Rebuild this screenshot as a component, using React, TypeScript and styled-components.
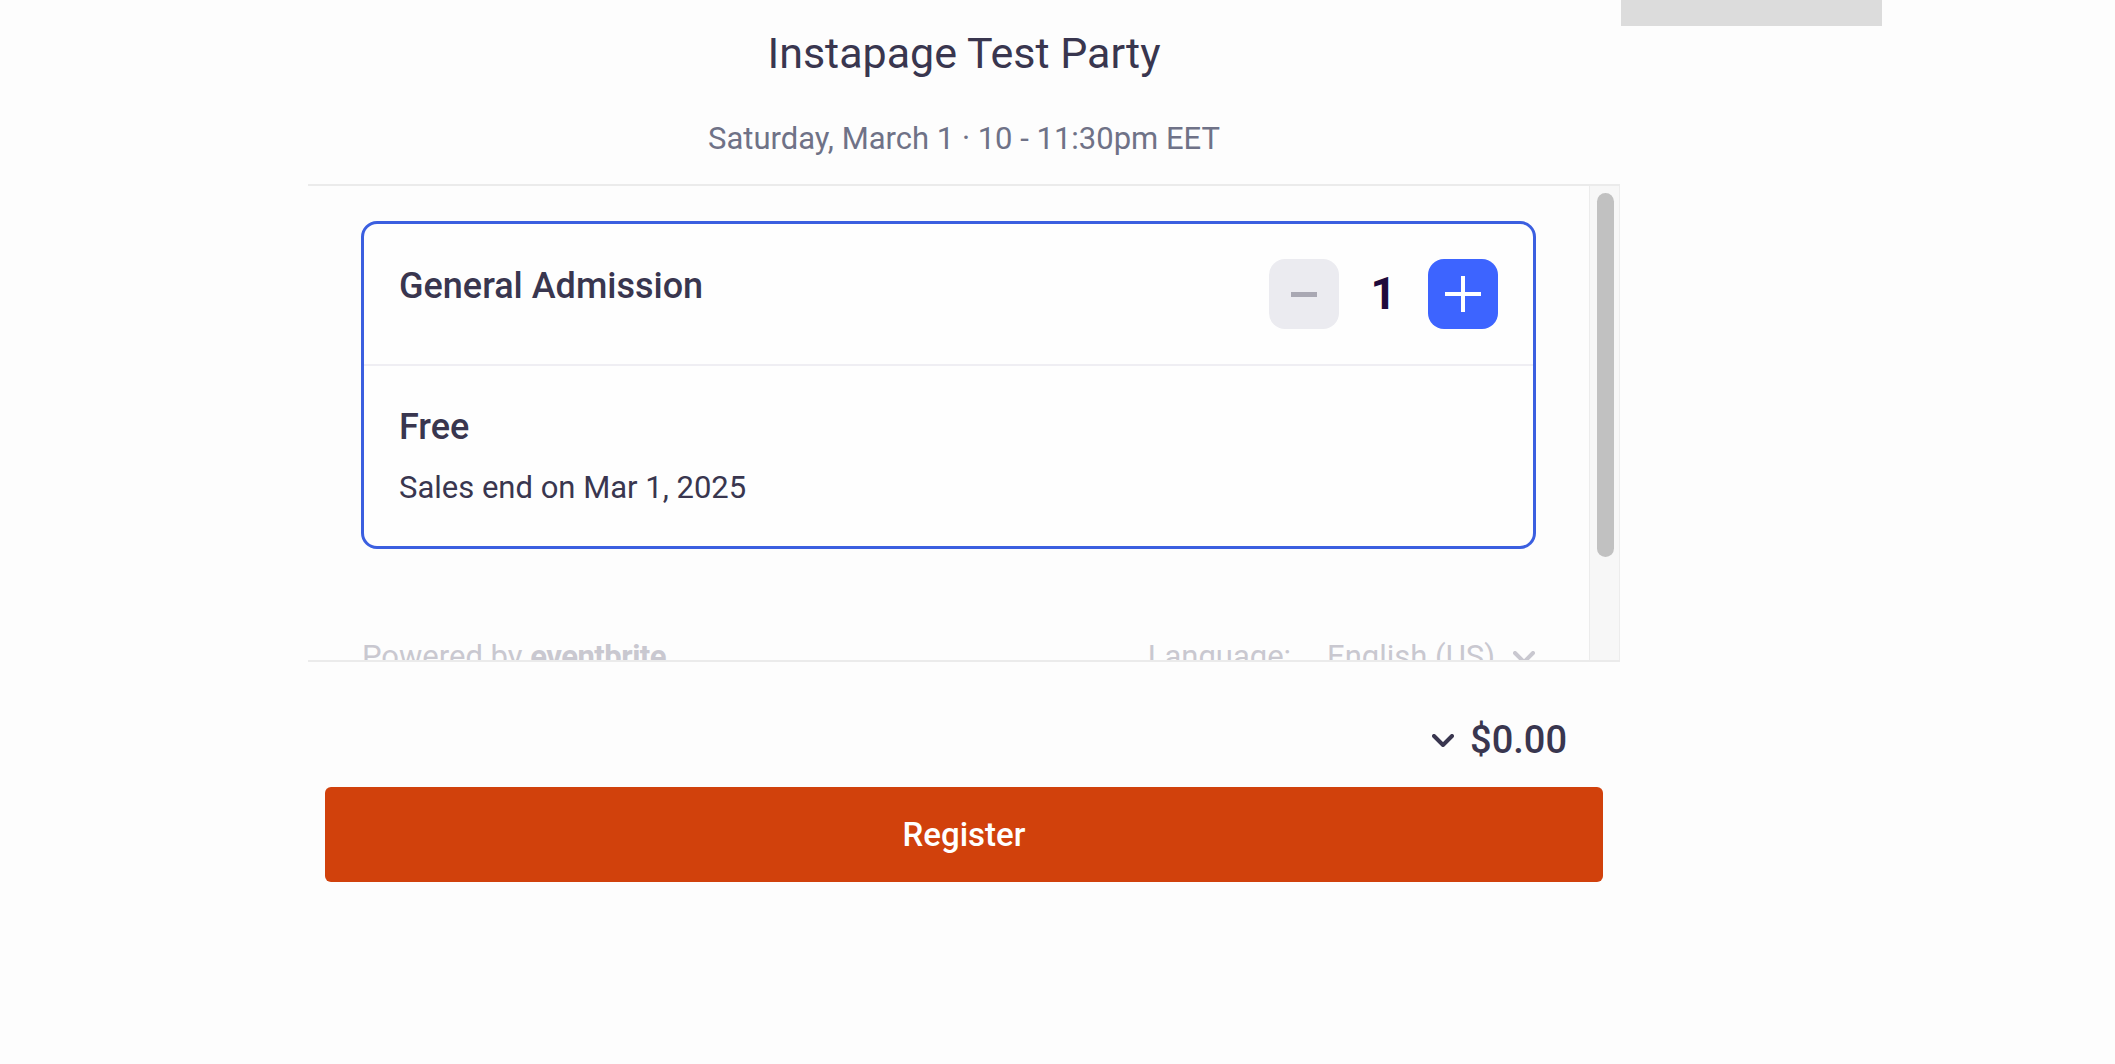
import React from "react";
import styled, { createGlobalStyle } from "styled-components";

const GlobalStyle = createGlobalStyle`
  html, body { margin: 0; padding: 0; background: #fdfdfd; }
  body { font-family: Roboto, "Liberation Sans", Arial, sans-serif; color: #39364f; }
  * { box-sizing: border-box; }
`;

const Page = styled.div`
  display: flex;
  align-items: flex-start;
  padding-left: 308px;
  min-height: 1064px;
`;

const Column = styled.main`
  width: 1312px;
  display: flex;
  flex-direction: column;
`;

const Aside = styled.aside`
  width: 261px;
  height: 26px;
  margin-left: 1px;
  background: #dcdcdc;
`;

const Header = styled.header`
  display: flex;
  flex-direction: column;
  align-items: center;
  padding: 28px 0 27px;
`;

const Title = styled.h1`
  margin: 0;
  font-size: 43px;
  line-height: 50px;
  font-weight: 400;
  color: #39364f;
`;

const DateLine = styled.p`
  margin: 43px 0 0;
  font-size: 31px;
  line-height: 36px;
  color: #6f7287;
`;

const Panel = styled.section`
  display: flex;
  height: 478px;
  border-top: 2px solid #ebebeb;
  border-bottom: 2px solid #ebebeb;
`;

const ScrollArea = styled.div`
  flex: 1;
  overflow: hidden;
  padding: 35px 53px 0;
`;

const Track = styled.div`
  width: 31px;
  background: #f7f7f7;
  border-left: 1px solid #ececec;
  border-right: 1px solid #ececec;
  padding: 7px 5px 0 7px;
`;

const Thumb = styled.div`
  height: 364px;
  border-radius: 9px;
  background: #c1c1c1;
`;

const Card = styled.div`
  border: 3px solid #3b5fe0;
  border-radius: 16px;
  background: #fefefe;
`;

const CardHeader = styled.div`
  display: flex;
  align-items: flex-start;
  justify-content: space-between;
  padding: 35px;
  border-bottom: 2px solid #efeef3;
`;

const TicketName = styled.h2`
  margin: 6px 0 0;
  font-size: 36px;
  line-height: 42px;
  font-weight: 500;
  color: #39364f;
`;

const Stepper = styled.div`
  display: flex;
  align-items: center;
`;

const StepButton = styled.button<{ $active?: boolean }>`
  width: 70px;
  height: 70px;
  border: none;
  border-radius: 16px;
  padding: 0;
  display: flex;
  align-items: center;
  justify-content: center;
  background: ${(p) => (p.$active ? "#3d64ff" : "#ebebf0")};
`;

const Count = styled.span`
  width: 89px;
  text-align: center;
  font-size: 45px;
  line-height: 52px;
  font-weight: 700;
  color: #1e0a3c;
`;

const CardBody = styled.div`
  padding: 39px 35px 39px;
`;

const Price = styled.div`
  font-size: 36px;
  line-height: 44px;
  font-weight: 500;
  color: #39364f;
`;

const SalesEnd = styled.div`
  margin-top: 20px;
  font-size: 31px;
  line-height: 38px;
  color: #39364f;
`;

const Footer = styled.div`
  margin-top: 89px;
  padding: 0 1px;
  display: flex;
  justify-content: space-between;
  align-items: center;
  font-size: 31px;
  line-height: 38px;
  color: #c9c8d0;
`;

const Brand = styled.span`
  font-weight: 700;
  letter-spacing: -0.5px;
`;

const LangGroup = styled.div`
  display: flex;
  align-items: center;
`;

const LangValue = styled.span`
  margin-left: 36px;
  margin-right: 18px;
`;

const Summary = styled.div`
  margin-top: 56px;
  padding-right: 53px;
  display: flex;
  justify-content: flex-end;
  align-items: center;
  gap: 16px;
`;

const Total = styled.span`
  font-size: 38px;
  line-height: 44px;
  font-weight: 500;
  color: #39364f;
`;

const RegisterButton = styled.button`
  margin: 25px 17px 0;
  height: 95px;
  border: none;
  border-radius: 6px;
  background: #d1410c;
  color: #ffffff;
  font-family: Roboto, "Liberation Sans", Arial, sans-serif;
  font-size: 33px;
  font-weight: 500;
`;

const Chevron = ({ color, w, h, sw }: { color: string; w: number; h: number; sw: number }) => (
  <svg width={w} height={h} viewBox={`0 0 ${w} ${h}`} fill="none">
    <path
      d={`M${sw / 2} ${sw / 2} L${w / 2} ${h - sw / 2} L${w - sw / 2} ${sw / 2}`}
      stroke={color}
      strokeWidth={sw}
      strokeLinecap="round"
      strokeLinejoin="round"
    />
  </svg>
);

export default function App() {
  return (
    <>
      <GlobalStyle />
      <Page>
        <Column>
          <Header>
            <Title>Instapage Test Party</Title>
            <DateLine>Saturday, March 1 · 10 - 11:30pm EET</DateLine>
          </Header>
          <Panel>
            <ScrollArea>
              <Card>
                <CardHeader>
                  <TicketName>General Admission</TicketName>
                  <Stepper>
                    <StepButton aria-label="Decrease">
                      <svg width="26" height="5" viewBox="0 0 26 5">
                        <rect width="26" height="5" fill="#a9a8b3" />
                      </svg>
                    </StepButton>
                    <Count>1</Count>
                    <StepButton $active aria-label="Increase">
                      <svg width="36" height="36" viewBox="0 0 36 36">
                        <rect x="16" y="0" width="4" height="36" fill="#ffffff" />
                        <rect x="0" y="16" width="36" height="4" fill="#ffffff" />
                      </svg>
                    </StepButton>
                  </Stepper>
                </CardHeader>
                <CardBody>
                  <Price>Free</Price>
                  <SalesEnd>Sales end on Mar 1, 2025</SalesEnd>
                </CardBody>
              </Card>
              <Footer>
                <span>
                  Powered by <Brand>eventbrite</Brand>
                </span>
                <LangGroup>
                  <span>Language:</span>
                  <LangValue>English (US)</LangValue>
                  <Chevron color="#c9c8d0" w={22} h={13} sw={4} />
                </LangGroup>
              </Footer>
            </ScrollArea>
            <Track>
              <Thumb />
            </Track>
          </Panel>
          <Summary>
            <Chevron color="#39364f" w={22} h={13} sw={4} />
            <Total>$0.00</Total>
          </Summary>
          <RegisterButton>Register</RegisterButton>
        </Column>
        <Aside />
      </Page>
    </>
  );
}
